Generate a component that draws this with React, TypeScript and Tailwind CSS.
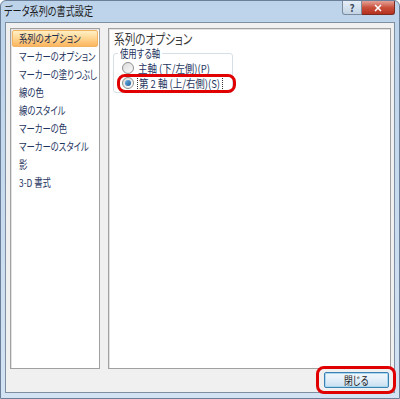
import { X } from 'lucide-react'

const items = [
  'マーカーのオプション',
  'マーカーの塗りつぶし',
  '線の色',
  '線のスタイル',
  'マーカーの色',
  'マーカーのスタイル',
  '影',
  '3-D 書式',
]

const jp = {
  fontFamily: '"Noto Sans CJK JP", "Noto Sans", sans-serif',
  fontFeatureSettings: '"palt"',
}

// narrow the CJK glyphs a bit, close to the old UI Gothic widths
const narrow = 'inline-block origin-left scale-x-[0.76] whitespace-nowrap'
const narrowRadio = 'inline-block origin-left scale-x-[0.86] whitespace-nowrap'

function Radio({ checked }: { checked?: boolean }) {
  return (
    <span className="flex h-[12px] w-[12px] shrink-0 items-center justify-center rounded-full border border-[#8f8f8f] bg-gradient-to-br from-[#dcdcdc] to-[#fafafa]">
      {checked && (
        <span className="h-[6px] w-[6px] rounded-full bg-gradient-to-br from-[#6fb3e6] to-[#1a5d9a]" />
      )}
    </span>
  )
}

export default function App() {
  return (
    <div
      className="relative flex h-[399px] w-[400px] flex-col overflow-hidden rounded-t-[6px] border border-[#6b7f98] bg-gradient-to-b from-[#bcd3ea] to-[#d3e3f3]"
      style={jp}
    >
      {/* title bar */}
      <div className="flex h-[21px] items-start">
        <span className={`mt-[3px] pl-[4px] text-[12px] leading-[14px] text-[#1b1b1b] ${narrow}`}>
          データ系列の書式設定
        </span>
        <div className="ml-auto mr-[4px] flex">
          <div className="flex h-[14px] w-[20px] items-center justify-center rounded-bl-[3px] border border-t-0 border-[#7b8ba0] bg-gradient-to-b from-[#e6eef7] to-[#c3d3e4] text-[10px] font-bold leading-none text-[#3d4b5c]">
            ?
          </div>
          <div className="flex h-[14px] w-[33px] items-center justify-center rounded-br-[3px] border border-l-0 border-t-0 border-[#7a2c22] bg-gradient-to-b from-[#e4a197] via-[#c9503c] to-[#b5301e]">
            <X size={10} strokeWidth={4} color="#ffffff" />
          </div>
        </div>
      </div>

      {/* client area */}
      <div className="mx-[4px] mb-[5px] flex flex-1 flex-col border border-[#7f8fa2] bg-[#f0f0f0]">
        <div className="flex h-[346px] gap-[8px] pl-[4px] pr-[3px] pt-[5px]">
          {/* left list */}
          <div className="w-[90px] overflow-hidden border border-[#a0a0a0] bg-white shadow-[inset_1px_1px_0_#e3e3e3]">
            <div className="mx-[1px] mt-[1px] flex h-[17px] items-center rounded-[2px] border border-[#f2b463] bg-gradient-to-b from-[#fff0c6] via-[#ffd58f] to-[#fbb55e] pl-[6px] text-[11px] text-[#1b2b4b]">
              <span className={narrow}>系列のオプション</span>
            </div>
            {items.map((t) => (
              <div key={t} className="flex h-[18px] items-center pl-[8px] text-[11px] text-[#1e3560]">
                <span className={narrow}>{t}</span>
              </div>
            ))}
          </div>

          {/* right panel */}
          <div className="flex-1 border border-[#a0a0a0] bg-white pl-[5px] pt-[1px] shadow-[inset_1px_1px_0_#e3e3e3]">
            <div className="h-[16px] text-[14px] leading-[16px] text-[#3a3a3a]">
              <span className={narrow}>系列のオプション</span>
            </div>
            <div className="relative ml-[-1px] mt-[7px] h-[40px] w-[120px] rounded-[3px] border border-[#d5dfe5]">
              <span className="absolute left-[4px] top-[-7px] h-[13px] w-[44px] bg-white pl-[2px] text-[11px] leading-[13px] text-[#1e3560]">
                <span className={narrow}>使用する軸</span>
              </span>
              <div className="mt-[7px] flex h-[14px] items-center gap-[4px] pl-[8px] text-[11px] text-[#1e3560]">
                <Radio />
                <span className={narrowRadio}>主軸 (下/左側)(P)</span>
              </div>
              <div className="flex h-[16px] items-center gap-[3px] pl-[8px] text-[11px] text-[#1e3560]">
                <Radio checked />
                <span className="flex h-[15px] w-[86px] items-center border border-dotted border-[#333] px-[1px]">
                  <span className={narrowRadio}>第 2 軸 (上/右側)(S)</span>
                </span>
              </div>
            </div>
          </div>
        </div>

        {/* footer */}
        <div className="flex justify-end pr-[5px] pt-[3px]">
          <div className="flex h-[16px] w-[65px] items-center justify-center rounded-[2px] border border-[#3c7fb1] bg-gradient-to-b from-[#f2f8fc] via-[#e2eef8] to-[#c7dff0] text-[11px] text-[#1b1b1b] shadow-[inset_0_0_0_1px_#a8d8f0]">
            <span className="inline-block scale-x-[0.8]">閉じる</span>
          </div>
        </div>
      </div>

      {/* red annotations */}
      <div className="absolute left-[116px] top-[73px] h-[19px] w-[119px] rounded-[8px] border-[3px] border-[#e00000]" />
      <div className="absolute left-[315px] top-[365px] h-[28px] w-[80px] rounded-[8px] border-[3px] border-[#e00000]" />
    </div>
  )
}
